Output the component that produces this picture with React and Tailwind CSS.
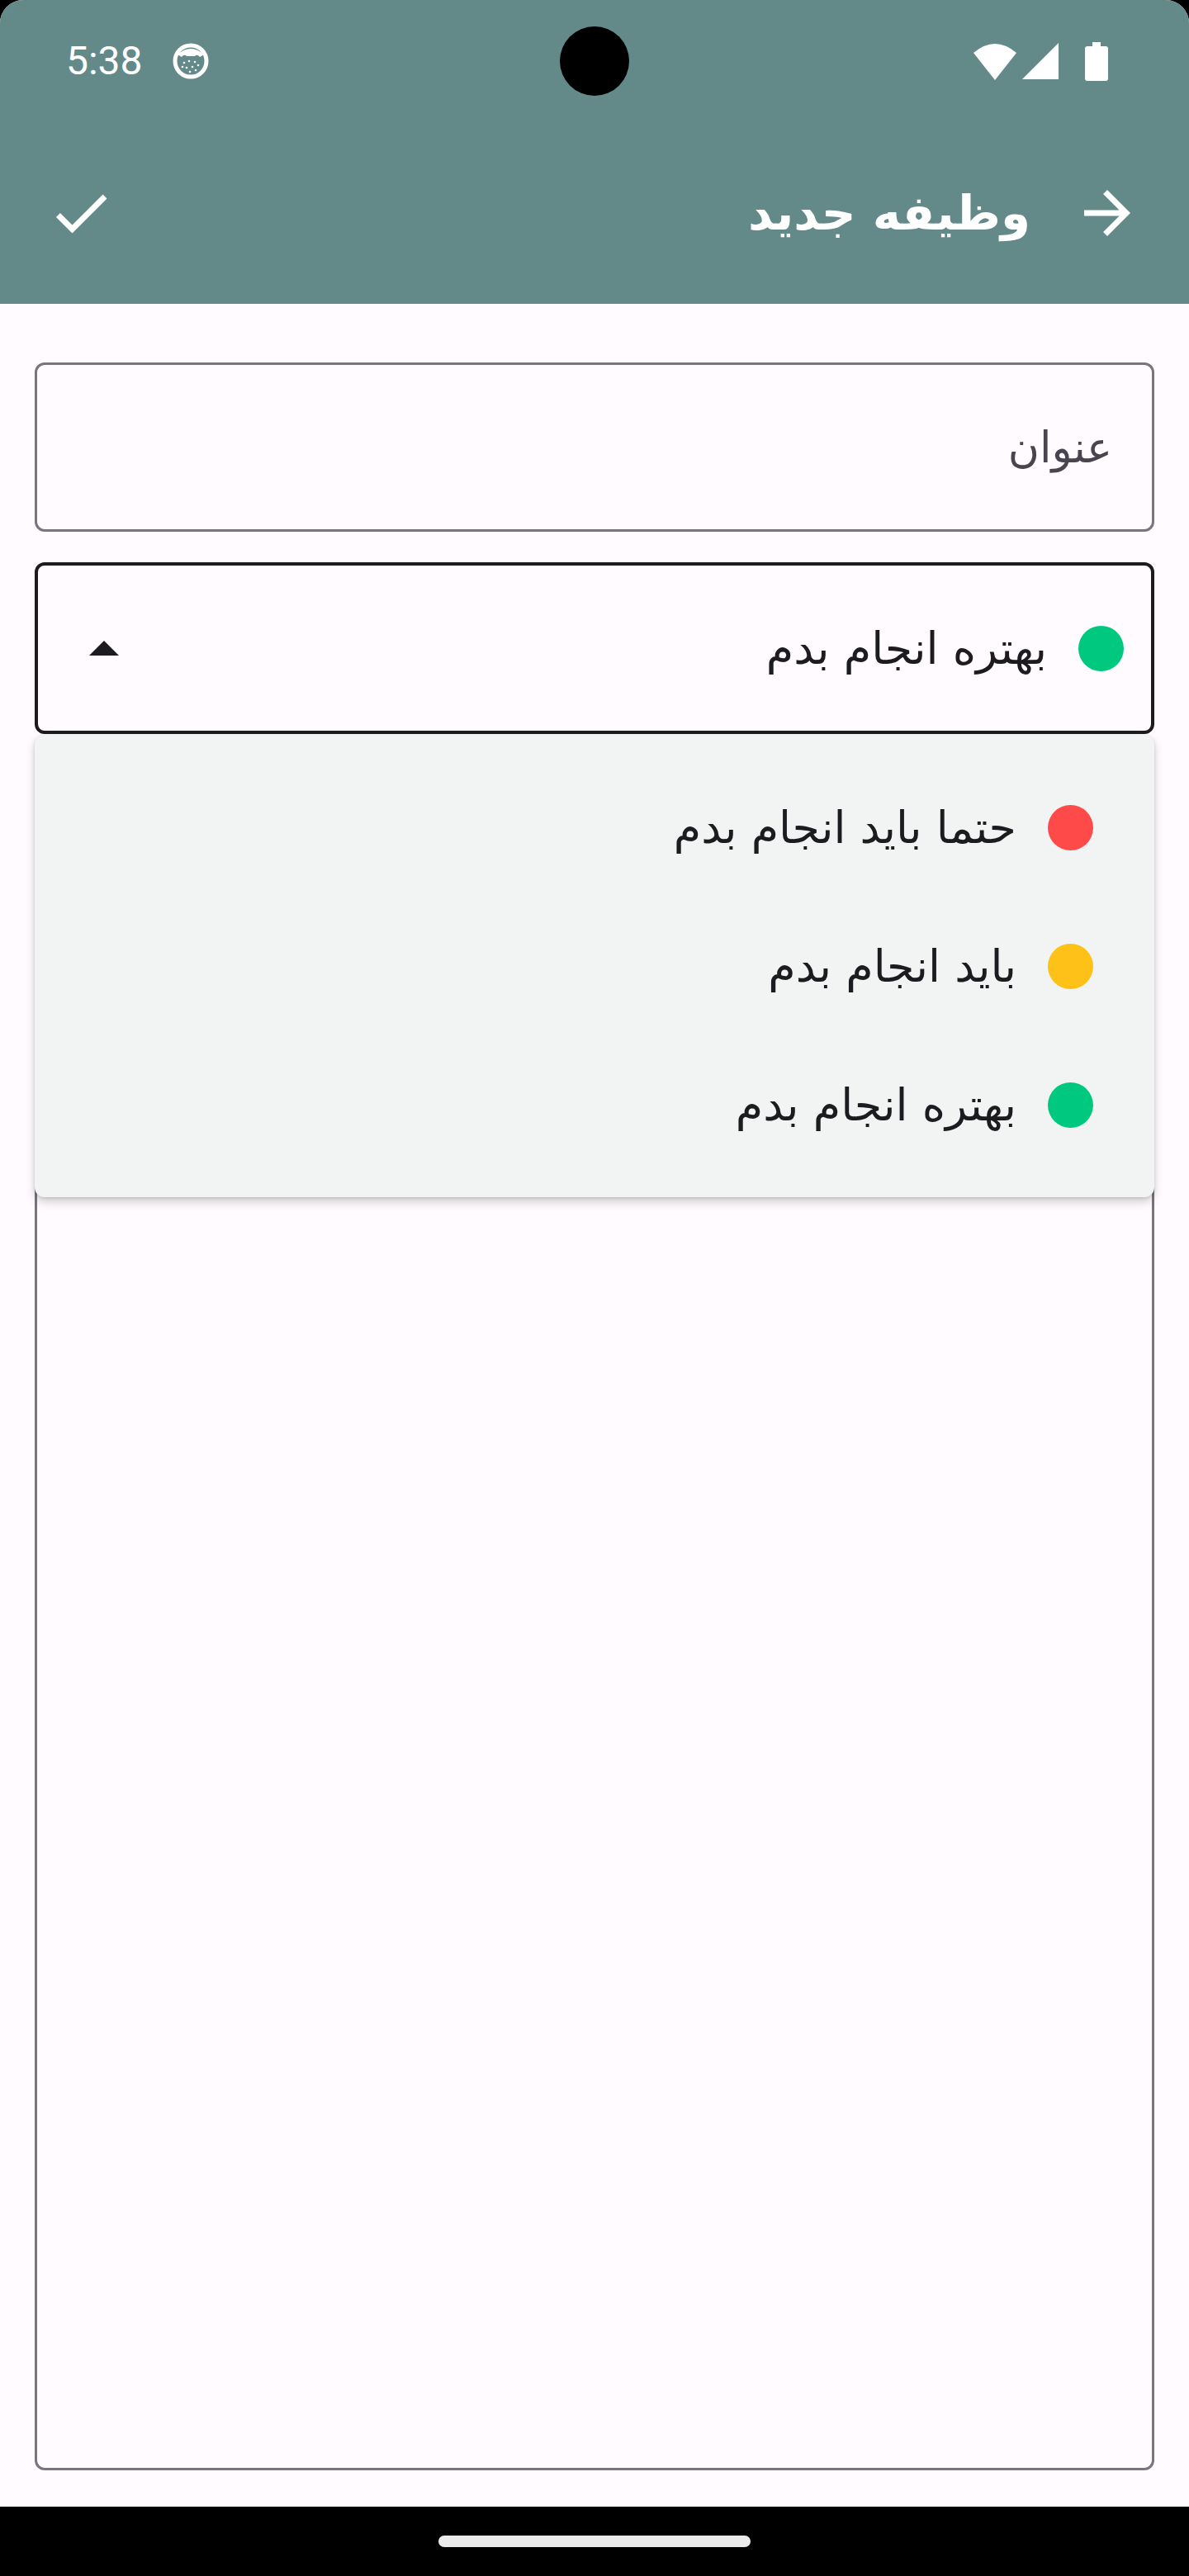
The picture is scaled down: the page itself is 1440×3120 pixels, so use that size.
import React from "react";

const FA = { fontFamily: '"DejaVu Sans", "Noto Sans", sans-serif' };

// status bar glyphs
const FaceIcon = () => (
  <svg width="44" height="44" viewBox="0 0 44 44">
    <circle cx="22" cy="22" r="19" fill="none" stroke="white" strokeWidth="5" />
    <path d="M6 14 Q22 0 38 14 L33 17 Q30 13 27 16 L17 16 Q14 13 11 17 Z" fill="white" />
    {[[14, 24], [20, 22], [27, 23], [31, 27], [17, 30], [24, 29], [21, 35], [28, 33], [12, 29]].map(
      ([x, y], i) => (
        <circle key={i} cx={x} cy={y} r="1.3" fill="white" />
      )
    )}
  </svg>
);

const WifiIcon = () => (
  <svg width="54" height="45" viewBox="0 0 54 45">
    <path d="M27 45 L1 12 Q27 -10 53 12 Z" fill="white" />
  </svg>
);

const SignalIcon = () => (
  <svg width="44" height="44" viewBox="0 0 44 44">
    <path d="M44 0 L44 44 L0 44 Z" fill="white" />
  </svg>
);

const BatteryIcon = () => (
  <svg width="28" height="47" viewBox="0 0 28 47">
    <rect x="9" y="0" width="10" height="6" fill="white" />
    <rect x="0" y="5" width="28" height="42" rx="3" fill="white" />
  </svg>
);

const CheckIcon = () => (
  <svg width="84" height="84" viewBox="0 0 24 24">
    <path d="M9 16.17L4.83 12l-1.42 1.41L9 19 21 7l-1.41-1.41z" fill="white" />
  </svg>
);

const ArrowIcon = () => (
  <svg width="84" height="84" viewBox="0 0 24 24">
    <path d="M12 4l-1.41 1.41L16.17 11H4v2h12.17l-5.58 5.59L12 20l8-8z" fill="white" />
  </svg>
);

const Dot = ({ color }) => <span className={`block w-[55px] h-[55px] rounded-full ${color}`} />;

const options = [
  { label: "حتما باید انجام بدم", color: "bg-[#ff4a4a]" },
  { label: "باید انجام بدم", color: "bg-[#fdc117]" },
  { label: "بهتره انجام بدم", color: "bg-[#00c97f]" },
];

export default function App() {
  return (
    <div className="w-[1440px] h-[3120px] bg-black flex flex-col">
      <div className="flex-1 flex flex-col bg-[#fffbfe] rounded-t-[28px] overflow-hidden">
        {/* header */}
        <div className="bg-[#638a89] h-[368px] flex flex-col">
          <div className="h-[148px] grid grid-cols-[1fr_84px_1fr] items-center px-[80px]">
            <div className="flex items-center gap-[36px]">
              <span className="text-white text-[48px] leading-none" style={{ fontFamily: "Roboto, sans-serif" }}>
                5:38
              </span>
              <FaceIcon />
            </div>
            <span className="block w-[84px] h-[84px] rounded-full bg-black" />
            <div className="flex items-center justify-end gap-[6px] mr-[18px]">
              <WifiIcon />
              <SignalIcon />
              <span className="w-[20px]" />
              <BatteryIcon />
            </div>
          </div>
          <div className="h-[220px] flex items-center justify-between pl-[56px] pr-[57px]">
            <CheckIcon />
            <div className="flex items-center gap-[51px]">
              <span dir="rtl" className="text-white font-bold text-[58px] leading-none" style={FA}>
                وظیفه جدید
              </span>
              <ArrowIcon />
            </div>
          </div>
        </div>

        {/* form */}
        <div className="flex-1 flex flex-col gap-[37px] px-[42px] pt-[71px] pb-[44px]">
          <div className="h-[205px] border-[3px] border-[#79747e] rounded-[12px] flex items-center justify-end pr-[48px]">
            <span dir="rtl" className="text-[#49454f] text-[52px]" style={FA}>
              عنوان
            </span>
          </div>

          <div className="relative">
            <div className="h-[208px] border-[4px] border-[#1c1b1f] rounded-[12px] flex items-center justify-between pl-[62px] pr-[33px]">
              <svg width="36" height="18" viewBox="0 0 10 5">
                <path d="M0 5l5-5 5 5z" fill="#1c1b1f" />
              </svg>
              <div className="flex items-center gap-[38px]">
                <span dir="rtl" className="text-[#1c1b1f] text-[54px]" style={FA}>
                  بهتره انجام بدم
                </span>
                <Dot color="bg-[#00c97f]" />
              </div>
            </div>

            {/* open menu */}
            <div className="absolute top-full left-0 right-0 mt-[1px] z-10 bg-[#f2f3f3] rounded-[12px] py-[28px] shadow-[0_6px_12px_rgba(0,0,0,0.18),0_1px_4px_rgba(0,0,0,0.12)]">
              {options.map((o) => (
                <div key={o.label} className="h-[168px] flex items-center justify-end gap-[38px] pr-[74px]">
                  <span dir="rtl" className="text-[#1c1b1f] text-[54px]" style={FA}>
                    {o.label}
                  </span>
                  <Dot color={o.color} />
                </div>
              ))}
            </div>
          </div>

          <div className="flex-1 border-[3px] border-[#79747e] rounded-[12px]" />
        </div>

        {/* nav bar */}
        <div className="h-[84px] bg-black flex items-center justify-center">
          <span className="block w-[378px] h-[14px] rounded-full bg-[#eaebea]" />
        </div>
      </div>
    </div>
  );
}
